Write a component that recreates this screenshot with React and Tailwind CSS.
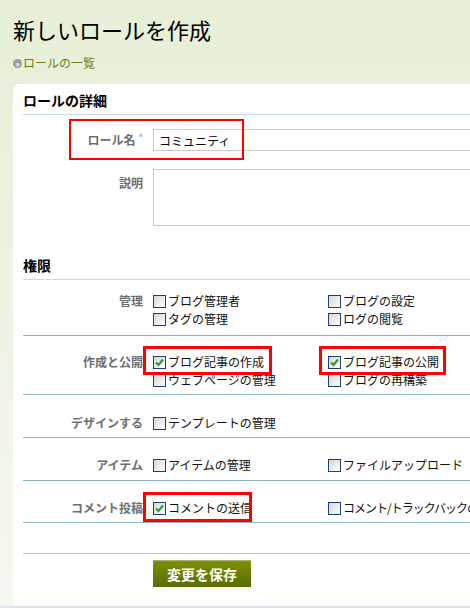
import React from 'react';

const font = { fontFamily: '"Noto Sans CJK JP", "Noto Sans", sans-serif' };

const groups = [
  { label: '管理', pt: 'pt-[12px]', pb: 'pb-[7px]', lines: [[['ブログ管理者'], ['ブログの設定']], [['タグの管理'], ['ログの閲覧']]] },
  { label: '作成と公開', pt: 'pt-[17px]', pb: 'pb-[5px]', lines: [[['ブログ記事の作成', true], ['ブログ記事の公開', true]], [['ウェブページの管理'], ['ブログの再構築']]] },
  { label: 'デザインする', pt: 'pt-[19px]', pb: 'pb-[5px]', lines: [[['テンプレートの管理']]] },
  { label: 'アイテム', pt: 'pt-[18px]', pb: 'pb-[6px]', lines: [[['アイテムの管理'], ['ファイルアップロード']]] },
  { label: 'コメント投稿', pt: 'pt-[18px]', pb: 'pb-[5px]', lines: [[['コメントの送信', true], ['コメント/トラックバックの管理', false, true]]] },
];

const Checkbox = ({ checked }) => (
  <span className="w-[13px] h-[13px] shrink-0 border border-[#1f3f6f] bg-gradient-to-br from-[#d6d6d6] to-white flex items-center justify-center">
    {checked && (
      <svg width="9" height="9" viewBox="0 0 9 9">
        <polyline points="1,4.5 3.5,7 8,1.5" fill="none" stroke="#1e9e1e" strokeWidth="2" />
      </svg>
    )}
  </span>
);

const Item = ({ text, checked, tight }) => (
  <label className="w-[175px] h-[18px] flex items-center whitespace-nowrap text-[12px] text-[#111]">
    <Checkbox checked={checked} />
    <span className={`ml-[2px] leading-[18px] ${tight ? 'tracking-[-1px]' : ''}`}>{text}</span>
  </label>
);

export default function App() {
  return (
    <div className="relative w-[470px] h-[608px] overflow-hidden bg-gradient-to-b from-[#e6efd6] via-[#eef4e4] to-[#f5f8f0]" style={font}>
      <div className="pt-[15px] pl-[13px]">
        <h1 className="text-[22px] leading-[28px] text-black font-normal">新しいロールを作成</h1>
        <a href="#" className="mt-[12px] flex items-center h-[16px] text-[12px] text-[#6f7d14]">
          <span className="w-[9px] h-[9px] rounded-full bg-[#9c9c9c] text-white text-[8px] leading-[9px] flex items-center justify-center font-bold">»</span>
          <span className="ml-[1px]">ロールの一覧</span>
        </a>
      </div>

      <div className="mt-[13px] ml-[13px] w-[520px] h-[522px] bg-white rounded-tl-[6px] pl-[10px] pt-[7px]">
        <h2 className="text-[14px] leading-[18px] font-bold text-black pb-[5px] border-b border-[#c6dbe8]">ロールの詳細</h2>

        <div className="flex items-center mt-[14px]">
          <div className="w-[120px] text-right text-[12px] font-bold text-[#6e6e6e]">
            ロール名<span className="ml-[3px] text-[9px] text-[#aaa] align-top">*</span>
          </div>
          <input
            defaultValue="コミュニティ"
            className="ml-[10px] w-[340px] h-[22px] border border-[#c8c8c8] px-[5px] text-[12px] text-black outline-none"
          />
        </div>

        <div className="flex items-start mt-[18px]">
          <div className="w-[120px] text-right text-[12px] font-bold text-[#6e6e6e] pt-[5px]">説明</div>
          <textarea className="ml-[10px] w-[340px] h-[57px] border border-[#c8c8c8] resize-none outline-none" />
        </div>

        <h2 className="mt-[30px] text-[14px] leading-[18px] font-bold text-black pb-[5px] border-b border-[#c6dbe8]">権限</h2>

        {groups.map((g) => (
          <div key={g.label} className={`flex items-start border-b border-[#8fb3c7] ${g.pt} ${g.pb}`}>
            <div className="w-[120px] h-[18px] leading-[18px] text-right text-[12px] font-bold text-[#6e6e6e] whitespace-nowrap">{g.label}</div>
            <div className="ml-[10px] flex flex-col">
              {g.lines.map((line, i) => (
                <div key={i} className="flex">
                  {line.map(([text, checked, tight]) => (
                    <Item key={text} text={text} checked={checked} tight={tight} />
                  ))}
                </div>
              ))}
            </div>
          </div>
        ))}

        <div className="h-[31px] border-b border-[#c4c4c4]" />

        <button className="mt-[6px] ml-[130px] w-[98px] h-[27px] border-t border-[#a8b070] bg-gradient-to-b from-[#7d9000] via-[#6c7e00] to-[#5b6c00] text-white text-[14px] font-bold">
          変更を保存
        </button>
      </div>
      <div className="h-[2px] bg-[#dce6f0]" />

      {/* annotation boxes */}
      <div className="absolute left-[69px] top-[119px] w-[175px] h-[41px] border-2 border-[#ff0000]" />
      <div className="absolute left-[143px] top-[346px] w-[129px] h-[29px] border-[3px] border-[#ff0000]" />
      <div className="absolute left-[319px] top-[346px] w-[127px] h-[29px] border-[3px] border-[#ff0000]" />
      <div className="absolute left-[143px] top-[492px] w-[109px] h-[30px] border-[3px] border-[#ff0000]" />
    </div>
  );
}
